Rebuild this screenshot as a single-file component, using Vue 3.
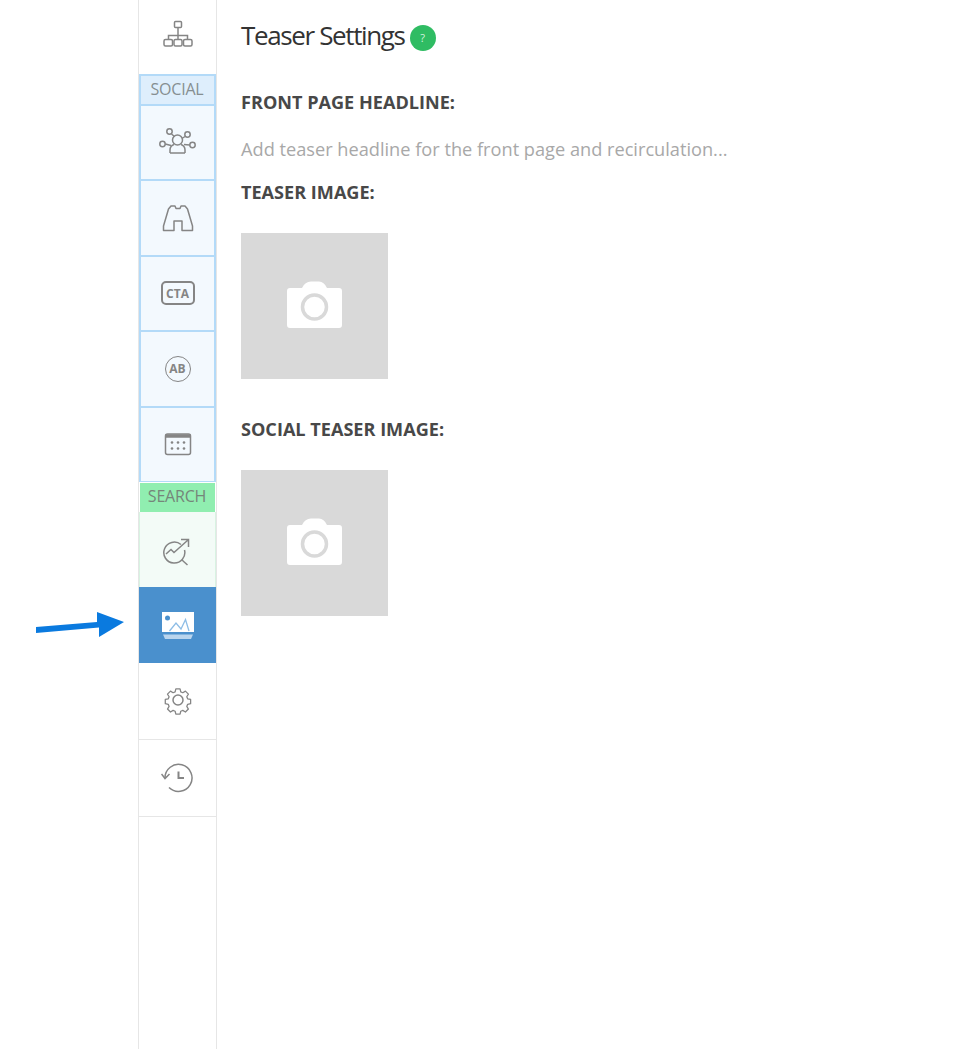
<script setup>
const socialTiles = ['network', 'binoculars', 'cta', 'ab', 'calendar']
</script>

<template>
  <div class="page">
    <svg class="arrow" width="92" height="32" viewBox="0 0 92 32">
      <path d="M1 17 L62 12 L62 2 L89 12 L64 27 L64 17.500 L1 23 Z" fill="#0a7adf" />
    </svg>
    <aside class="rail">
      <div class="tile top">
        <svg width="32" height="28" viewBox="0 0 32 28" class="ico">
          <rect x="12.500" y="1.500" width="7" height="6" rx="1" />
          <path d="M16 7.500v8M6.500 20v-4.500h19V20M16 15.500V20" />
          <rect x="2" y="19.500" width="8.500" height="6.500" rx="1.500" />
          <rect x="12" y="19.500" width="8" height="6.500" rx="1.500" />
          <rect x="21.500" y="19.500" width="8.500" height="6.500" rx="1.500" />
        </svg>
      </div>
      <div class="label social-label">SOCIAL</div>
      <div v-for="t in socialTiles" :key="t" class="tile social">
        <svg v-if="t === 'network'" width="38" height="30" viewBox="0 0 38 30" class="ico">
          <circle cx="10.500" cy="3.500" r="2.700" />
          <circle cx="28.500" cy="6.500" r="2.700" />
          <circle cx="3.500" cy="16" r="2.700" />
          <circle cx="33.500" cy="17" r="2.700" />
          <circle cx="18.500" cy="12" r="5" />
          <path d="M11 25v-3q0-4 4-5.500M26 25v-3q0-4-4-5.500M11 25h15M12.500 6l3 2.500M26 8.500l-3 2M6.300 16l5.700 1.500M30.700 17l-5.700-.5" />
        </svg>
        <svg v-else-if="t === 'binoculars'" width="32" height="30" viewBox="0 0 32 30" class="ico">
          <path d="M1.500 27.500h10.500v-9.500h8v9.500h10.500v-4.500L25.500 6 23 3h-4l-1 2.500h-4L13 3H9L6.500 6 1.500 23z" stroke-linejoin="round" />
        </svg>
        <div v-else-if="t === 'cta'" class="cta">CTA</div>
        <div v-else-if="t === 'ab'" class="ab">AB</div>
        <svg v-else width="28" height="26" viewBox="0 0 28 26" class="ico cal">
          <rect x="1.500" y="3" width="25" height="20.500" rx="2" />
          <path d="M1.500 5h25" stroke-width="3.500" />
          <g class="dots">
            <circle cx="8" cy="11.500" r="1.300" /><circle cx="14" cy="11.500" r="1.300" /><circle cx="20" cy="11.500" r="1.300" />
            <circle cx="8" cy="17.500" r="1.300" /><circle cx="14" cy="17.500" r="1.300" /><circle cx="20" cy="17.500" r="1.300" />
          </g>
        </svg>
      </div>
      <div class="label search-label">SEARCH</div>
      <div class="tile search">
        <svg class="search-ico ico" width="30" height="34" viewBox="0 0 30 34">
          <path d="M18 10.500A10.500 10.500 0 1 0 21.500 16" />
          <path d="M3 20l5-4.500 3 3 14-12.500M18 5.500h7.500V13" />
          <path d="M19 26l5.500 5" />
        </svg>
      </div>
      <div class="tile active">
        <svg width="34" height="30" viewBox="0 0 34 30">
          <rect x="1" y="2" width="32" height="20" fill="#fff" />
          <circle cx="6.500" cy="8" r="2.500" fill="#4a90cd" />
          <path d="M8.500 21 15 13l5 6 4.500-9.500L28 21" fill="none" stroke="#8dbde6" stroke-width="1.300" />
          <path d="M2 24.500h30L30 29H4z" fill="#b9d5ee" />
        </svg>
      </div>
      <div class="tile plain">
        <svg class="gear-ico ico" width="30" height="30" viewBox="0 0 30 30">
          <circle cx="15" cy="15" r="5" />
          <path d="M12.500 2h5l.8 3.500 2.400 1 3.100-1.900 3.500 3.500-1.900 3.100 1 2.400 3.500.8v5l-3.500.8-1 2.400 1.900 3.100-3.500 3.500-3.100-1.900-2.400 1-.8 3.500h-5l-.8-3.500-2.400-1-3.100 1.900-3.500-3.500 1.900-3.100-1-2.400-3.500-.8v-5l3.500-.8 1-2.400L2.700 8.100l3.500-3.500 3.100 1.900 2.400-1z" transform="translate(2.200 2.200) scale(.85)" stroke-linejoin="round" />
        </svg>
      </div>
      <div class="tile plain">
        <svg width="34" height="30" viewBox="0 0 34 30" class="ico">
          <path d="M4 15A13.500 13.500 0 1 1 8 24.500" />
          <path d="M.5 11 4 15.500 8.500 11" />
          <path d="M17.500 8.500V15H23" stroke-width="2" />
        </svg>
      </div>
    </aside>
    <main class="content">
      <h1 class="title">Teaser Settings<span class="help">?</span></h1>
      <h2 class="field first">FRONT PAGE HEADLINE:</h2>
      <p class="placeholder">Add teaser headline for the front page and recirculation...</p>
      <h2 class="field teaser">TEASER IMAGE:</h2>
      <div class="image">
        <svg class="camera" width="55" height="47" viewBox="0 0 55 47">
          <path d="M3 7h12Q18 .5 24 .5h8Q37 .5 40 7h12q3 0 3 3v34q0 3-3 3H3q-3 0-3-3V10q0-3 3-3z" fill="#fff" />
          <circle cx="27.500" cy="26" r="12" fill="#fff" stroke="#d9d9d9" stroke-width="3.500" />
        </svg>
      </div>
      <h2 class="field social-field">SOCIAL TEASER IMAGE:</h2>
      <div class="image">
        <svg class="camera" width="55" height="47" viewBox="0 0 55 47">
          <path d="M3 7h12Q18 .5 24 .5h8Q37 .5 40 7h12q3 0 3 3v34q0 3-3 3H3q-3 0-3-3V10q0-3 3-3z" fill="#fff" />
          <circle cx="27.500" cy="26" r="12" fill="#fff" stroke="#d9d9d9" stroke-width="3.500" />
        </svg>
      </div>
    </main>
  </div>
</template>

<style>
html, body { margin: 0; background: #fff; }
</style>

<style scoped>
.page {
  position: relative;
  display: flex;
  height: 1049px;
  width: 980px;
  overflow: hidden;
  padding-left: 138px;
  box-sizing: border-box;
  font-family: "Open Sans", "Noto Sans", sans-serif;
  background: #fff;
}
.arrow { position: absolute; left: 35px; top: 610px; }
.rail {
  width: 79px;
  flex: none;
  box-sizing: border-box;
  border-left: 1px solid #e6e6e6;
  border-right: 1px solid #e6e6e6;
  display: flex;
  flex-direction: column;
}
.tile {
  box-sizing: border-box;
  display: flex;
  align-items: center;
  justify-content: center;
  height: 75px;
  flex: none;
}
.top { height: 74px; padding-bottom: 6px; }
.label {
  box-sizing: border-box;
  display: flex;
  align-items: center;
  justify-content: center;
  font-size: 16px;
  letter-spacing: -0.2px;
  color: #868e91;
}
.social-label {
  height: 31px;
  padding: 0 1px 2px 0;
  background: #deeefc;
  border: 2px solid #b3daf8;
  border-bottom-width: 1px;
}
.social {
  height: 75.400px;
  background: #f3f9fe;
  border: 2px solid #b3daf8;
  border-top-width: 1px;
  border-bottom-width: 1px;
}
.search-label {
  height: 29px;
  margin: 1px 1px 0;
  padding: 0 1px 2px 0;
  background: #90eeb0;
  color: #75867a;
}
.search {
  background: #f3fbf7;
  border: 1px solid #d8f3e2;
  border-top: 0;
  border-bottom: 0;
}
.search-ico { margin-top: 3px; }
.gear-ico { margin-top: -1px; }
.active { background: #4a90cd; height: 76px; }
.plain { height: 77px; border-bottom: 1px solid #e6e6e6; }
.ico { fill: none; stroke: #858585; stroke-width: 1.500; }
.cal .dots { fill: #858585; stroke: none; }
.cta {
  box-sizing: border-box;
  width: 34px;
  height: 24px;
  border: 2px solid #858585;
  border-radius: 5px;
  font-size: 12px;
  font-weight: 700;
  color: #858585;
  display: flex;
  align-items: center;
  justify-content: center;
}
.ab {
  box-sizing: border-box;
  width: 26px;
  height: 26px;
  border: 1.500px solid #858585;
  border-radius: 50%;
  font-size: 12px;
  font-weight: 700;
  color: #858585;
  display: flex;
  align-items: center;
  justify-content: center;
}
.content { padding-left: 24px; flex: 1; }
.title {
  margin: 16px 0 0;
  height: 38px;
  line-height: 38px;
  font-size: 26px;
  font-weight: 400;
  letter-spacing: -1.370px;
  color: #333;
  display: flex;
  align-items: center;
  gap: 5px;
}
.help {
  width: 26px;
  height: 26px;
  border-radius: 50%;
  background: #2fbc63;
  color: #d5f2df;
  font-size: 11px;
  letter-spacing: 0;
  display: flex;
  align-items: center;
  justify-content: center;
  margin-top: 6px;
}
.field {
  margin: 0;
  font-size: 18.100px;
  line-height: 24px;
  font-weight: 700;
  color: #484848;
}
.first { margin-top: 36px; }
.placeholder {
  margin: 23px 0 0;
  font-size: 18.200px;
  line-height: 24px;
  color: #a8a8a8;
}
.teaser { margin-top: 19px; }
.image {
  width: 147px;
  height: 146px;
  margin-top: 29px;
  background: #d9d9d9;
  display: flex;
  align-items: center;
  justify-content: center;
}
.camera { margin-bottom: 4px; margin-right: 1px; }
.social-field { margin-top: 38px; }
</style>
